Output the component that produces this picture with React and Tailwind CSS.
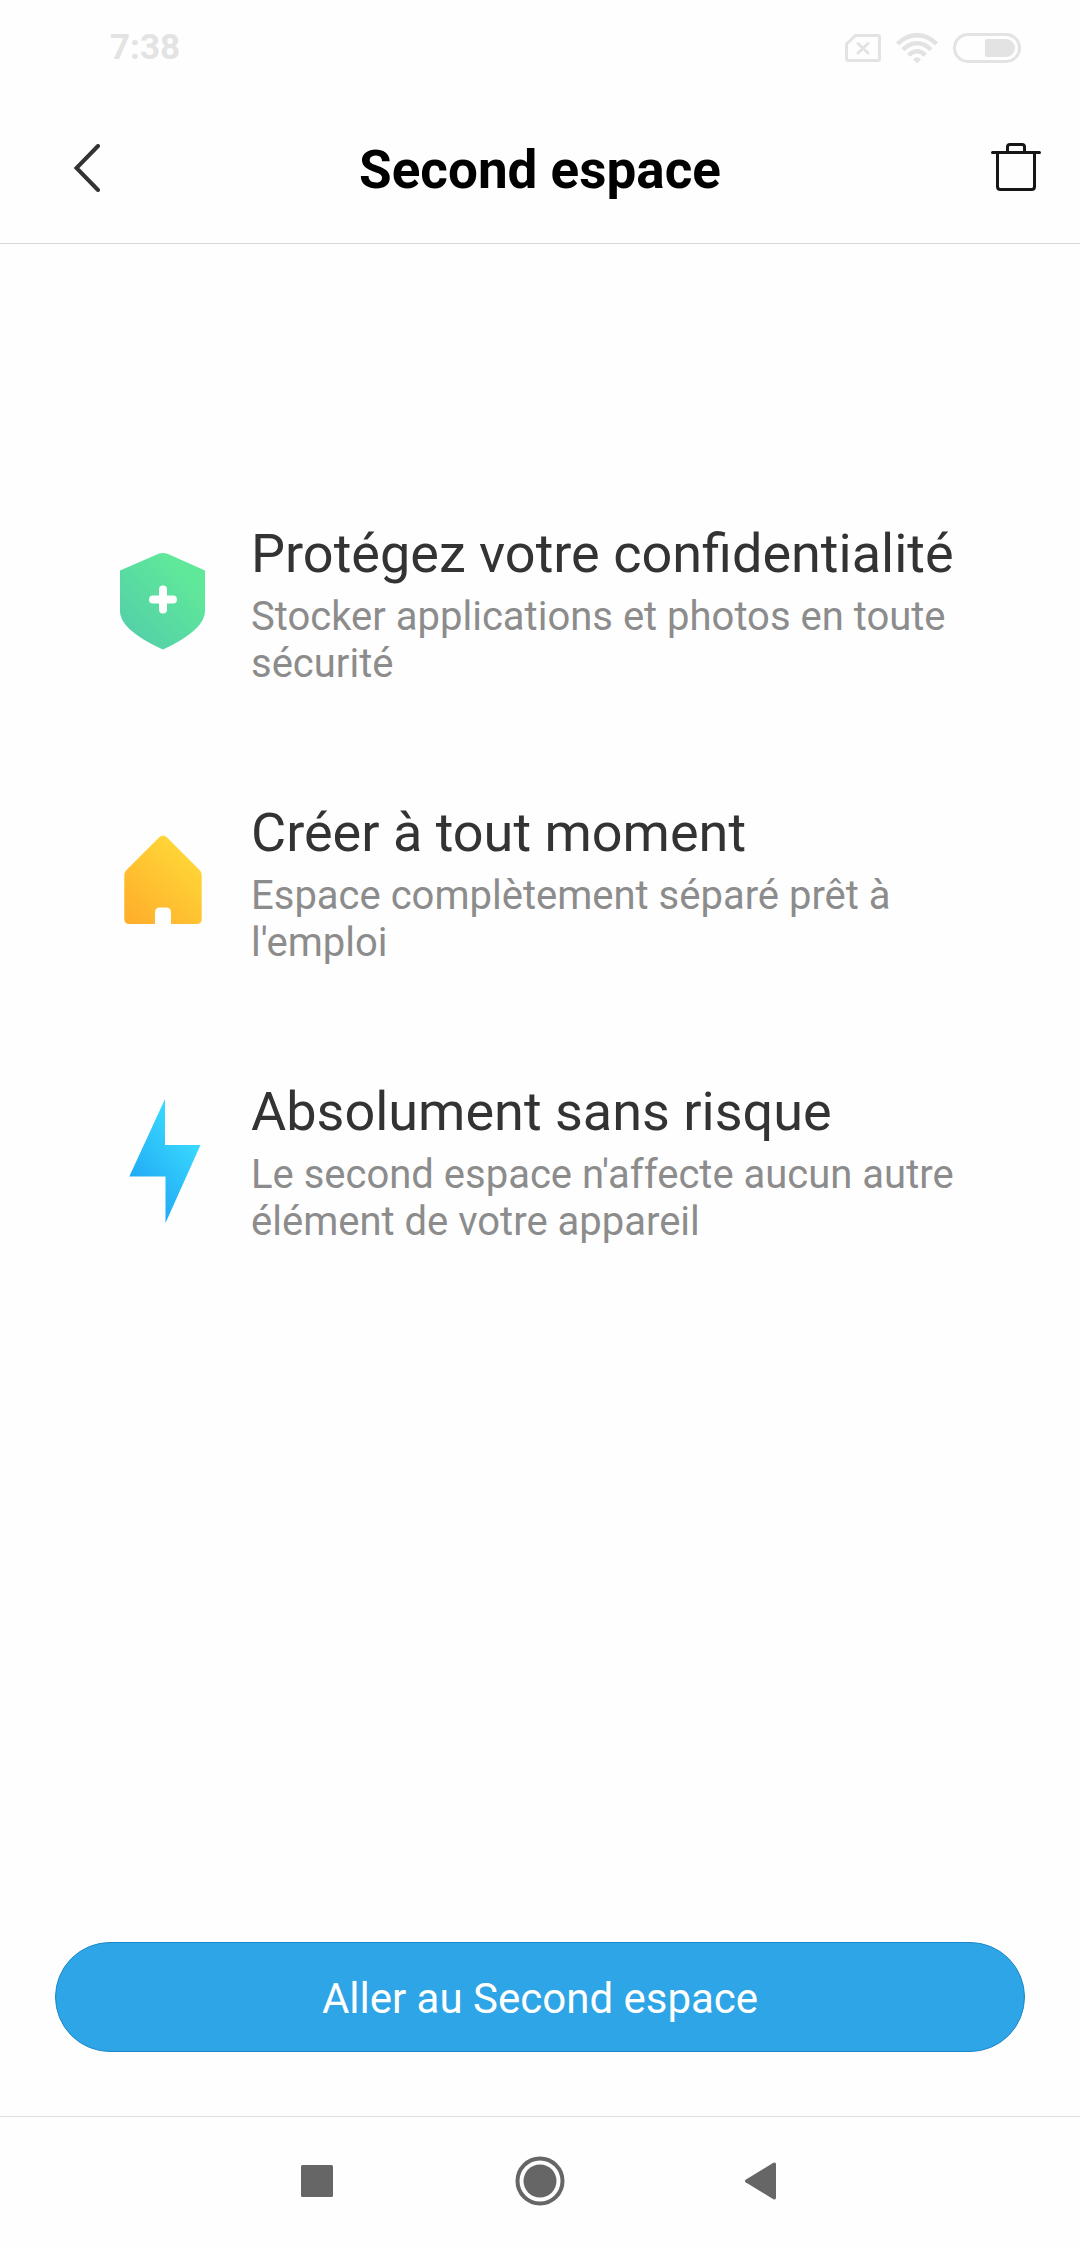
function ShieldIcon() {
  return (
    <svg viewBox="0 0 88 130" className="w-22 shrink-0" aria-hidden="true">
      <defs>
        <linearGradient id="shield" x1="0.1" y1="0.9" x2="0.8" y2="0.1">
          <stop offset="0.05" stopColor="#54d0a8" />
          <stop offset="0.9" stopColor="#60e89a" />
        </linearGradient>
      </defs>
      <path d="M1 30.5 L39 14 Q44 12 49 14 L86 30.5 V71 C86 83 73 96 44 109.500 C14 96 1 83 1 71 Z" fill="url(#shield)" />
      <path d="M44 49.500 V69.500 M34 59.500 H54" stroke="white" strokeWidth="8" strokeLinecap="round" />
    </svg>
  );
}

function HouseIcon() {
  return (
    <svg viewBox="0 0 88 130" className="w-22 shrink-0" aria-hidden="true">
      <defs>
        <linearGradient id="house" x1="0.1" y1="1" x2="0.8" y2="0.1">
          <stop offset="0" stopColor="#ffae2b" />
          <stop offset="0.9" stopColor="#ffd436" />
        </linearGradient>
      </defs>
      <path
        d="M40.500 18 Q44 15 47.500 18 L80.500 51 Q82.700 53.200 82.700 55.500 V100 Q82.700 105 77.700 105 H52 V93.500 Q52 88.500 47 88.500 H41 Q36 88.500 36 93.500 V105 H10.300 Q5.300 105 5.300 100 V55.500 Q5.300 53.200 7.500 51 Z"
        fill="url(#house)"
      />
    </svg>
  );
}

function BoltIcon() {
  return (
    <svg viewBox="0 0 88 130" className="w-22 shrink-0" aria-hidden="true">
      <defs>
        <linearGradient id="bolt" x1="0.25" y1="0.85" x2="0.75" y2="0.15">
          <stop offset="0" stopColor="#20a8f5" />
          <stop offset="1" stopColor="#3bdcff" />
        </linearGradient>
      </defs>
      <path d="M46 1 V47 H81.500 L46.500 125 V78.500 H10.300 Z" fill="url(#bolt)" />
    </svg>
  );
}

const features = [
  { Icon: ShieldIcon, title: 'Protégez votre confidentialité', text: 'Stocker applications et photos en toute sécurité' },
  { Icon: HouseIcon, title: 'Créer à tout moment', text: "Espace complètement séparé prêt à l'emploi" },
  { Icon: BoltIcon, title: 'Absolument sans risque', text: "Le second espace n'affecte aucun autre élément de votre appareil" },
];

function StatusBar() {
  return (
    <div className="flex h-24 items-center justify-between pl-[110px] pr-[59px] text-[#e3e3e3]">
      <span className="text-[35px] font-bold leading-10">7:38</span>
      <div className="flex items-center gap-[15px]">
        <svg viewBox="0 0 36 28" className="w-9" fill="none" stroke="currentColor" aria-hidden="true">
          <path d="M10.500 1.500 H33 Q34.500 1.500 34.500 3 V25 Q34.500 26.500 33 26.500 H3 Q1.500 26.500 1.500 25 V10 Z" strokeWidth="3" strokeLinejoin="round" />
          <path d="M13 9.500 L23 19 M23 9.500 L13 19" strokeWidth="3" strokeLinecap="round" />
        </svg>
        <svg viewBox="0 0 42 30" className="w-[42px]" fill="none" stroke="currentColor" strokeWidth="4.500" aria-hidden="true">
          <path d="M1.500 11 Q10 2.200 21 2.200 Q32 2.200 40.500 11" />
          <path d="M7 16.800 Q13 10.300 21 10.300 Q29 10.300 35 16.800" />
          <path d="M12.700 22.300 Q16.500 18.300 21 18.300 Q25.500 18.300 29.300 22.300" />
          <path d="M17 26.500 Q21 22 25 26.500 L21.800 29.600 Q21 30.300 20.200 29.600 Z" fill="currentColor" stroke="none" />
        </svg>
        <svg viewBox="0 0 68 30" className="w-17" fill="none" aria-hidden="true">
          <rect x="1.500" y="1.500" width="65" height="27" rx="13.500" stroke="currentColor" strokeWidth="3" />
          <path d="M34 6 H53 A9 9 0 0 1 53 24 H34 Q32 24 32 22 V8 Q32 6 34 6 Z" fill="currentColor" />
        </svg>
      </div>
    </div>
  );
}

function Header() {
  return (
    <header className="grid h-37 grid-cols-[1fr_auto_1fr] items-center border-b border-[#d9d9d9] px-[39px]">
      <button type="button" aria-label="Retour" className="justify-self-start px-8 pb-1">
        <svg viewBox="0 0 32 48" className="w-8" fill="none" stroke="#333333" strokeWidth="4" strokeLinecap="round" aria-hidden="true">
          <path d="M27 2 L5.500 24 L27 46" />
        </svg>
      </button>
      <h1 className="text-[53px] font-bold leading-15 text-black">Second espace</h1>
      <button type="button" aria-label="Supprimer" className="justify-self-end pb-1.5">
        <svg viewBox="0 0 50 48" className="w-[50px]" fill="none" stroke="#161616" strokeWidth="3" strokeLinecap="round" aria-hidden="true">
          <path d="M1.500 9.500 H48.500" />
          <path d="M16.500 9 V4 Q16.500 1.500 19 1.500 H31 Q33.500 1.500 33.500 4 V9" />
          <path d="M6.500 10 V43.500 Q6.500 46.500 9.500 46.500 H40.500 Q43.500 46.500 43.500 43.500 V10" />
        </svg>
      </button>
    </header>
  );
}

function NavBar() {
  return (
    <nav className="flex h-[130px] items-center justify-center gap-[180px] border-t border-[#e0e0e0] pb-0.5 text-[#666666]">
      <button type="button" aria-label="Applications récentes">
        <svg viewBox="0 0 36 36" className="w-9" fill="currentColor" aria-hidden="true">
          <rect x="2" y="2" width="32" height="32" rx="1.500" />
        </svg>
      </button>
      <button type="button" aria-label="Accueil">
        <svg viewBox="0 0 50 50" className="w-[50px]" aria-hidden="true">
          <circle cx="25" cy="25" r="22.500" fill="none" stroke="currentColor" strokeWidth="4" />
          <circle cx="25" cy="25" r="16.500" fill="currentColor" />
        </svg>
      </button>
      <button type="button" aria-label="Précédent">
        <svg viewBox="0 0 36 38" className="w-9" fill="currentColor" aria-hidden="true">
          <path d="M0.600 17.800 L28 1 Q31 -0.500 31 2.500 V35.500 Q31 38.500 28 37 L0.600 20.200 Q-0.800 19 0.600 17.800 Z" />
        </svg>
      </button>
    </nav>
  );
}

export default function App() {
  return (
    <div className="flex min-h-screen flex-col bg-[#fefefe] font-[Roboto,sans-serif]">
      <StatusBar />
      <Header />
      <main className="flex flex-1 flex-col justify-between pt-[278px] pb-16">
        <ul className="flex flex-col gap-[114px] pl-[119px] pr-28">
          {features.map(({ Icon, title, text }) => (
            <li key={title} className="flex items-center gap-11">
              <Icon />
              <div className="flex flex-col gap-2">
                <h2 className="text-[54px] leading-[63px] text-[#333333]">{title}</h2>
                <p className="text-[40px] leading-[47px] text-[#8c8c8c]">{text}</p>
              </div>
            </li>
          ))}
        </ul>
        <div className="px-[55px]">
          <button type="button" className="h-[110px] w-full rounded-full border border-[#1c86c9] bg-[#2ea5e6] pt-0.5 text-[42px] text-white">
            Aller au Second espace
          </button>
        </div>
      </main>
      <NavBar />
    </div>
  );
}
